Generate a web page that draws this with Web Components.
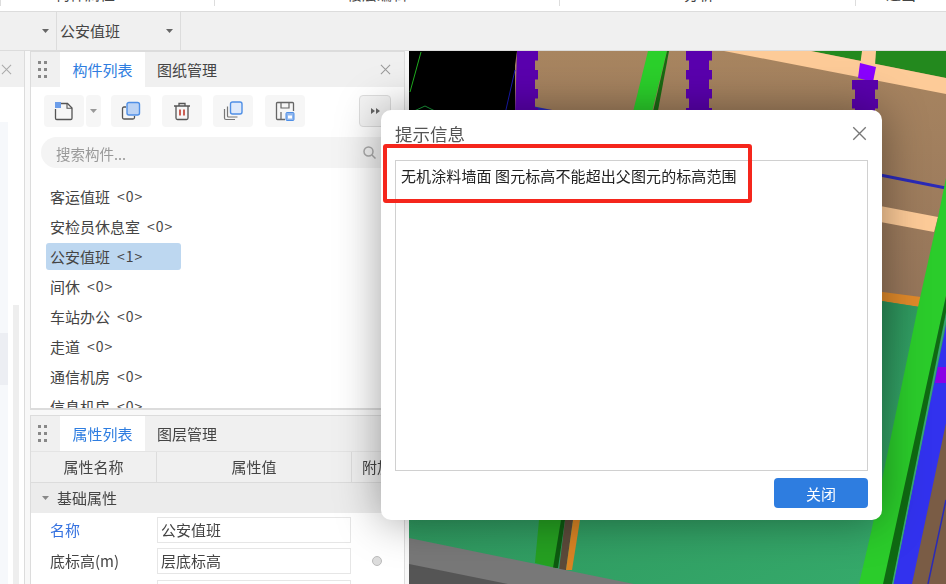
<!DOCTYPE html>
<html lang="zh">
<head>
<meta charset="utf-8">
<title>提示信息</title>
<style>
html, body { margin: 0; height: 100%; overflow: hidden; }
body {
  font: 15px/1.2 "Noto Sans CJK SC", "Liberation Sans", sans-serif;
  color: #444;
  background: #f8f8f8;
}
</style>
</head>
<body>
<app-frame>
  <app-top slot="top"></app-top>
  <app-bar slot="bar" value="公安值班"></app-bar>
  <left-dock slot="left"></left-dock>

  <tab-panel slot="upper" tabs="构件列表,图纸管理" closable>
    <action-row></action-row>
    <search-box placeholder="搜索构件..."></search-box>
    <item-list>
      <list-row name="客运值班" count="0"></list-row>
      <list-row name="安检员休息室" count="0"></list-row>
      <list-row name="公安值班" count="1" selected></list-row>
      <list-row name="间休" count="0"></list-row>
      <list-row name="车站办公" count="0"></list-row>
      <list-row name="走道" count="0"></list-row>
      <list-row name="通信机房" count="0"></list-row>
      <list-row name="信息机房" count="0"></list-row>
    </item-list>
  </tab-panel>

  <tab-panel slot="lower" tabs="属性列表,图层管理" open>
    <prop-head></prop-head>
    <prop-group label="基础属性"></prop-group>
    <prop-row label="名称" value="公安值班" link></prop-row>
    <prop-row label="底标高(m)" value="层底标高" dot></prop-row>
    <prop-row></prop-row>
  </tab-panel>

  <scene-view slot="scene"></scene-view>
</app-frame>

<alert-dialog heading="提示信息" action="关闭">无机涂料墙面 图元标高不能超出父图元的标高范围</alert-dialog>

<script>
const FONT = `"Noto Sans CJK SC", "Liberation Sans", sans-serif`;
const BLUE = '#2e7de0';
const SOFT = 'blur(.4px)';

const define =
  (name, render) =>
    customElements.define(name, class extends HTMLElement {
      connectedCallback() {
        if (this.shadowRoot) return;
        this.attachShadow({ mode: 'open' }).innerHTML = render(this);
      }
    });

const attr =
  (el, key, fallback = '') =>
    el.getAttribute(key) ?? fallback;

const caret =
  (color = '#666') => `<svg width="7" height="4" viewBox="0 0 7 4"><path d="M0 0h7L3.5 4z" fill="${color}"/></svg>`;

const cross =
  (size, color) => `<svg width="${size}" height="${size}" viewBox="0 0 12 12"><path d="M1 1l10 10M11 1L1 11" stroke="${color}" stroke-width="1.1" fill="none"/></svg>`;

const grip = `<svg width="9" height="18" viewBox="0 0 9 18" fill="#888"><rect x="0" y="0" width="3" height="3"/><rect x="6" y="0" width="3" height="3"/><rect x="0" y="7" width="3" height="3"/><rect x="6" y="7" width="3" height="3"/><rect x="0" y="14" width="3" height="3"/><rect x="6" y="14" width="3" height="3"/></svg>`;

define('app-frame', () => `
  <style>
    :host {
      display: grid;
      width: 946px;
      height: 584px;
      grid-template-columns: 25px 5px 375px 4px 1fr;
      grid-template-rows: 12px 39px 359px 5px 1fr;
      overflow: hidden;
      filter: ${SOFT};
    }
    ::slotted([slot=top]) { grid-column: 1 / -1; grid-row: 1; }
    ::slotted([slot=bar]) { grid-column: 1 / -1; grid-row: 2; }
    ::slotted([slot=left]) { grid-column: 1; grid-row: 3 / 6; }
    ::slotted([slot=upper]) { grid-column: 3; grid-row: 3; }
    ::slotted([slot=lower]) { grid-column: 3; grid-row: 5; }
    ::slotted([slot=scene]) { grid-column: 5; grid-row: 3 / 6; }
  </style>
  <slot name="top"></slot><slot name="bar"></slot><slot name="left"></slot>
  <slot name="upper"></slot><slot name="lower"></slot><slot name="scene"></slot>
`);

// ribbon above the toolbar, only the feet of its labels are on screen
define('app-top', () => `
  <style>
    :host {
      display: grid;
      grid-template-columns: 214px 345px 296px 1fr;
      background: #fff;
      border-bottom: 1px solid #dcdcdc;
      box-sizing: border-box;
      overflow: hidden;
      font-size: 15px;
      color: #444;
    }
    div { height: 6px; border-left: 1px solid #ddd; white-space: nowrap; }
    div:first-child { border: 0; }
    span { display: block; line-height: 18px; margin-top: -15px; }
  </style>
  <div><span style="margin-left:54px">构件属性</span></div>
  <div><span style="margin-left:132px">楼层编辑</span></div>
  <div><span style="margin-left:124px">分析</span></div>
  <div><span style="margin-left:30px">退出</span></div>
`);

define('app-bar', el => `
  <style>
    :host {
      display: flex;
      background: #f0f0f0;
      border-bottom: 1px solid #dcdcdc;
      box-sizing: border-box;
      color: #444;
    }
    .lead { width: 56px; padding-right: 7px; display: flex; align-items: center; justify-content: flex-end; box-sizing: border-box; }
    .pick {
      display: flex;
      align-items: center;
      justify-content: space-between;
      width: 125px;
      padding: 0 7px 0 3px;
      box-sizing: border-box;
      border-left: 1px solid #dcdcdc;
      border-right: 1px solid #dcdcdc;
    }
  </style>
  <div class="lead">${caret()}</div>
  <div class="pick"><span>${attr(el, 'value')}</span>${caret()}</div>
`);

define('left-dock', () => `
  <style>
    :host {
      display: flex;
      flex-direction: column;
      background: #fff;
      border-right: 1px solid #dcdcdc;
      box-sizing: border-box;
      overflow: hidden;
    }
    header { height: 36px; background: #f0f0f0; display: flex; align-items: center; padding-left: 1px; flex: none; }
    .body { flex: 1; display: grid; grid-template-columns: 8px 5px 6px; grid-template-rows: 35px 1fr; }
    .tree { grid-column: 1; grid-row: 2; background: #f6f8fb; display: flex; flex-direction: column; }
    .hit { height: 52px; margin-top: 211px; background: #eceef3; }
    .bar { grid-column: 3; grid-row: 2; background: #eeeeee; margin-top: 183px; }
  </style>
  <header>${cross(11, '#aaa')}</header>
  <div class="body"><div class="tree"><div class="hit"></div></div><div class="bar"></div></div>
`);

define('tab-panel', el => {
  const tabs = attr(el, 'tabs').split(',');
  return `
  <style>
    :host {
      display: flex;
      flex-direction: column;
      min-height: 0;
      background: #fff;
      border: solid #dcdcdc;
      border-width: 1px 1px 2px 1px;
      box-sizing: border-box;
      overflow: hidden;
    }
    :host([open]) { border-bottom: 0; }
    header {
      flex: none;
      height: 35px;
      display: flex;
      align-items: stretch;
      background: #f0f0f0;
    }
    .grip { width: 29px; display: flex; align-items: center; box-sizing: border-box; padding-left: 7px; }
    .tab { width: 85px; display: flex; align-items: center; justify-content: center; color: #444; font-size: 15px; }
    .tab.on { background: #fff; color: ${BLUE}; }
    .tab + .tab { width: 84px; }
    .x { margin-left: auto; width: 37px; display: flex; align-items: center; justify-content: center; }
    main { flex: 1; min-height: 0; display: flex; flex-direction: column; }
  </style>
  <header>
    <div class="grip">${grip}</div>
    ${tabs.map((t, i) => `<div class="tab ${i ? '' : 'on'}">${t}</div>`).join('')}
    ${el.hasAttribute('closable') ? `<div class="x">${cross(11, '#999')}</div>` : ''}
  </header>
  <main><slot></slot></main>`;
});

define('tool-btn', el => `
  <style>
    :host {
      display: flex;
      align-items: center;
      justify-content: center;
      width: ${attr(el, 'w', '40')}px;
      height: 32px;
      background: #f6f6f6;
      border-radius: 4px;
      box-sizing: border-box;
    }
    :host([outlined]) { border: 1px solid #ddd; background: #f4f4f4; }
  </style>
  <slot></slot>
`);

define('action-row', () => `
  <style>
    :host { display: flex; flex: none; align-items: center; gap: 11px; padding: 8px 13px 0 13px; height: 32px; box-sizing: content-box; }
    .split { display: flex; gap: 2px; margin-right: -1px; }
    .more { margin-left: auto; }
    .save { margin-left: 1px; }
    svg { display: block; }
  </style>
  <div class="split">
    <tool-btn w="40">
      <svg width="20" height="20" viewBox="0 0 20 20" fill="none">
        <path d="M5 2.5h8.5l4.500 4.500v10.200a1.300 1.300 0 0 1-1.300 1.300H2.800a1.300 1.300 0 0 1-1.300-1.300V8" stroke="#555" stroke-width="1.300"/>
        <path d="M13 2.500v4.800h5" stroke="#555" stroke-width="1.100"/>
        <rect x="1" y="1" width="6" height="6" fill="#6d9eea"/>
      </svg>
    </tool-btn>
    <tool-btn w="15">${caret('#999')}</tool-btn>
  </div>
  <tool-btn>
    <svg width="20" height="20" viewBox="0 0 20 20" fill="none">
      <path d="M5 6H3a1.500 1.500 0 0 0-1.500 1.500v9A1.500 1.500 0 0 0 3 18h9a1.500 1.500 0 0 0 1.500-1.500V15" stroke="#555" stroke-width="1.300"/>
      <rect x="6" y="1.500" width="12.500" height="12.500" rx="2" fill="#bcd3f4" stroke="#4f8fe6" stroke-width="1.400"/>
    </svg>
  </tool-btn>
  <tool-btn>
    <svg width="18" height="20" viewBox="0 0 18 20" fill="none">
      <path d="M1 5h16M6 4.500V2.500h6v2M3 5v12a1.500 1.500 0 0 0 1.500 1.500h9A1.500 1.500 0 0 0 15 17V5" stroke="#555" stroke-width="1.300"/>
      <path d="M7 8.500v6M11 8.500v6" stroke="#c0392b" stroke-width="1.600"/>
    </svg>
  </tool-btn>
  <tool-btn>
    <svg width="20" height="20" viewBox="0 0 20 20" fill="none">
      <path d="M1.500 8v9a1.500 1.500 0 0 0 1.500 1.500h9" stroke="#777" stroke-width="1.200"/>
      <path d="M4.500 5.500v9.500a1 1 0 0 0 1 1h9" stroke="#777" stroke-width="1.200"/>
      <rect x="7.500" y="1" width="11.500" height="12" rx="2" fill="#dfeafb" stroke="#4f8fe6" stroke-width="1.400"/>
    </svg>
  </tool-btn>
  <tool-btn class="save">
    <svg width="20" height="20" viewBox="0 0 20 20" fill="none">
      <path d="M10 18.500H2.500a1 1 0 0 1-1-1v-15a1 1 0 0 1 1-1h15a1 1 0 0 1 1 1V10" stroke="#666" stroke-width="1.300"/>
      <path d="M6 2v5h8V2M6 18v-7" stroke="#666" stroke-width="1.200"/>
      <rect x="11" y="11.500" width="8" height="8" rx="1" fill="#8fb6ee" stroke="#4f8fe6"/>
      <rect x="13" y="14.500" width="4" height="3" fill="#fff"/>
    </svg>
  </tool-btn>
  <tool-btn class="more" w="32" outlined>
    <svg width="9" height="6" viewBox="0 0 9 6" fill="#666"><path d="M0 0l4 3-4 3zM5 0l4 3-4 3z"/></svg>
  </tool-btn>
`);

define('search-box', el => `
  <style>
    :host {
      flex: none;
      display: flex;
      align-items: center;
      justify-content: space-between;
      height: 31px;
      margin: 10px 4px 0 10px;
      padding: 0 24px 0 15px;
      background: #f4f4f4;
      border-radius: 16px;
      color: #999;
      font-size: 14.500px;
    }
    span { position: relative; top: 1px; }
    svg { display: block; }
  </style>
  <span>${attr(el, 'placeholder')}</span>
  <svg width="13" height="13" viewBox="0 0 13 13" fill="none" stroke="#aaa" stroke-width="1.500"><circle cx="5.500" cy="5.500" r="4.500"/><path d="M9 9l3.500 3.500"/></svg>
`);

define('item-list', () => `
  <style>
    :host { display: block; flex: 1; min-height: 0; overflow: hidden; padding: 14px 0 0 15px; }
  </style>
  <slot></slot>
`);

define('list-row', el => `
  <style>
    :host { display: flow-root; height: 30px; }
    div {
      display: flex;
      align-items: center;
      height: 27px;
      width: 135px;
      margin-top: 1px;
      padding-left: 4px;
      box-sizing: border-box;
      border-radius: 3px;
      color: #444;
      font-size: 15px;
      white-space: nowrap;
    }
    :host([selected]) div { background: #bdd7f0; }
    span { margin-left: 7px; font-size: 14px; letter-spacing: 1px; }
  </style>
  <div>${attr(el, 'name')}<span>&lt;${attr(el, 'count')}&gt;</span></div>
`);

const COLS = 'grid-template-columns: 126px 195px 1fr';

define('prop-head', () => `
  <style>
    :host {
      flex: none;
      display: grid;
      ${COLS};
      height: 30px;
      background: #f0f0f0;
      border-top: 1px solid #e4e4e4;
      border-bottom: 1px solid #dcdcdc;
      font-size: 15px;
      color: #444;
    }
    div { display: flex; align-items: center; justify-content: center; border-right: 1px solid #dcdcdc; white-space: nowrap; }
    div:last-child { border: 0; justify-content: flex-start; padding-left: 10px; }
  </style>
  <div>属性名称</div><div>属性值</div><div>附加</div>
`);

define('prop-group', el => `
  <style>
    :host {
      flex: none;
      display: flex;
      align-items: center;
      gap: 8px;
      height: 30px;
      margin-bottom: 1px;
      padding-left: 11px;
      background: #ececec;
      font-size: 15px;
      color: #444;
    }
  </style>
  ${caret('#888')}<span>${attr(el, 'label')}</span>
`);

define('prop-row', el => `
  <style>
    :host {
      flex: none;
      display: grid;
      ${COLS};
      align-items: center;
      height: 31.500px;
      font-size: 15px;
      color: #444;
    }
    .k { padding-left: 19px; }
    :host([link]) .k { color: #3572e0; }
    .v {
      height: 26px;
      margin-right: 1px;
      padding-left: 3px;
      border: 1px solid #e6e6e6;
      box-sizing: border-box;
      line-height: 24px;
    }
    .d { width: 10px; height: 10px; margin-left: 20px; border-radius: 50%; background: #ddd; border: 1px solid #bbb; box-sizing: border-box; }
  </style>
  <div class="k">${attr(el, 'label')}</div>
  <div class="v">${attr(el, 'value')}</div>
  ${el.hasAttribute('dot') ? '<div class="d"></div>' : '<div></div>'}
`);

// scene coordinates are screenshot pixels minus the canvas origin (409, 51)
const at =
  pts =>
    pts.map(([x, y]) => `${x - 409},${y - 51}`).join(' ');

const poly =
  (fill, ...pts) =>
    `<polygon fill="${fill}" points="${at(pts)}"/>`;

const line =
  (stroke, w, [x1, y1], [x2, y2]) =>
    `<line stroke="${stroke}" stroke-width="${w}" x1="${x1 - 409}" y1="${y1 - 51}" x2="${x2 - 409}" y2="${y2 - 51}"/>`;

const notched =
  (fill, x, w, inset, top, bottom) => {
    const left = [], right = [];
    for (let y = top, i = 0; y < bottom; y += 9.500, i++) {
      const dx = i % 2 ? inset : 0;
      left.push([x + dx, y], [x + dx, y + 9.500]);
      right.unshift([x + w - dx, y + 9.500], [x + w - dx, y]);
    }
    return poly(fill, ...left, ...right);
  };

define('scene-view', () => `
  <style>
    :host { display: block; background: #000; overflow: hidden; min-height: 0; }
    svg { display: block; }
  </style>
  <svg width="537" height="533" viewBox="0 0 537 533">
    <defs>
      <linearGradient id="wall" x1="0" y1="0" x2="0" y2="1">
        <stop offset="0" stop-color="#a88560"/><stop offset="1" stop-color="#94745a"/>
      </linearGradient>
      <linearGradient id="floor" x1="0" y1="0" x2="1" y2="1">
        <stop offset="0" stop-color="#2a8a56"/><stop offset="1" stop-color="#36ac6c"/>
      </linearGradient>
    </defs>
    ${poly('url(#wall)', [515, 51], [946, 51], [946, 330], [515, 330])}
    ${poly('url(#floor)', [409, 300], [946, 300], [946, 584], [409, 584])}
    ${poly('#000', [409, 51], [517, 51], [506, 130], [409, 130])}
    ${line('#1fae1f', 1, [421, 52], [410, 92])}
    ${line('#1a1ab0', 1, [515, 70], [505, 114])}
    <polygon fill="none" stroke="#1c9c3c" points="${at([[412, 112], [425, 106], [437, 112], [437, 125], [412, 125]])}"/>
    <ellipse cx="15" cy="62" rx="5" ry="2" fill="#ddd"/>
    ${poly('#23891e', [811, 51], [946, 51], [946, 78])}
    ${poly('#fdcb98', [724, 51], [811, 51], [946, 78], [946, 94])}
    ${poly('#fdcb98', [862, 51], [876, 51], [875, 66], [860, 66])}
    ${line('#2a2ab8', 3, [534, 108], [575, 116])}
    ${notched('#5a00ae', 517, 21, 3, 51, 110)}
    ${poly('#5a00ae', [517, 51], [530, 51], [530, 115], [515, 115])}
    ${notched('#5a00ae', 686, 26, 3, 51, 115)}
    ${poly('#8a00ff', [860, 63], [876, 67], [873, 82], [858, 78])}
    ${notched('#5a00ae', 852, 26, 3, 80, 115)}
    ${poly('#2bd02b', [648, 51], [667, 51], [651, 116], [632, 116])}
    ${poly('#1a6a12', [667, 51], [669, 51], [657, 116], [652, 116])}
    ${line('#2a2ab8', 3, [875, 174], [946, 188])}
    ${poly('#fdcb98', [875, 205], [938, 217], [934, 232], [875, 221])}
    ${poly('#e08a2a', [875, 291], [921, 297], [919, 307], [875, 300])}
    ${poly('url(#floor)', [875, 300], [920, 307], [900, 430], [875, 430])}
    ${poly('#2bcc2b', [946, 178], [946, 296], [884, 584], [859, 584], [872, 528], [918, 307], [938, 217])}
    ${poly('#0f6a12', [946, 296], [946, 312], [892, 584], [883, 584])}
    ${poly('#7a5c45', [946, 340], [946, 584], [893, 584])}
    ${poly('#3232ee', [946, 325], [946, 423], [912, 584], [893, 584])}
    ${line('#3aa878', 1, [946, 318], [893, 584])}
    ${poly('#8a00e6', [938, 367], [946, 367], [946, 383], [935, 383])}
    ${line('#2a2ab8', 1.500, [928, 584], [946, 500])}
    ${poly('#25a021', [539, 520], [561, 520], [556, 568], [535, 563])}
    ${poly('#0d5a10', [561, 520], [565, 520], [558, 568], [553, 568])}
    ${poly('#5c4a3a', [565, 520], [573, 520], [566, 570], [559, 570])}
    ${poly('#d98424', [573, 520], [580, 520], [572, 570], [566, 570])}
    ${poly('#787878', [409, 538], [712, 600], [409, 600])}
    ${poly('#555', [409, 564], [587, 600], [409, 600])}
  </svg>
`);

define('alert-dialog', el => `
  <style>
    :host {
      position: absolute;
      left: 381px;
      top: 110px;
      width: 501px;
      height: 410px;
      display: flex;
      flex-direction: column;
      background: #fff;
      border-radius: 10px;
      box-shadow: 0 0 45px rgba(0, 0, 0, .38);
      padding: 0 14px;
      box-sizing: border-box;
      font-family: ${FONT};
      color: #333;
      filter: ${SOFT};
    }
    header {
      flex: none;
      height: 50px;
      padding-bottom: 4px;
      box-sizing: border-box;
      display: flex;
      align-items: center;
      justify-content: space-between;
      font-size: 17.500px;
      color: #555;
    }
    header svg { margin-right: 1px; }
    .box {
      flex: none;
      height: 311px;
      border: 1px solid #d0d0d0;
      box-sizing: border-box;
      padding: 5px 5px;
      font-size: 15px;
      letter-spacing: .1px;
      line-height: 20px;
      color: #222;
    }
    footer { flex: none; display: flex; justify-content: flex-end; padding-top: 7px; }
    button {
      width: 94px;
      height: 30px;
      border: 0;
      border-radius: 4px;
      background: ${BLUE};
      color: #fff;
      font: 15px ${FONT};
      padding: 0;
    }
    .mark {
      position: absolute;
      left: 2px;
      top: 34px;
      width: 369px;
      height: 59px;
      border: 4px solid #f5261c;
      border-radius: 3px;
      box-sizing: border-box;
      pointer-events: none;
    }
  </style>
  <header><span>${attr(el, 'heading')}</span>${cross(15, '#777')}</header>
  <div class="box"><slot></slot></div>
  <footer><button>${attr(el, 'action')}</button></footer>
  <div class="mark"></div>
`);
</script>
</body>
</html>
